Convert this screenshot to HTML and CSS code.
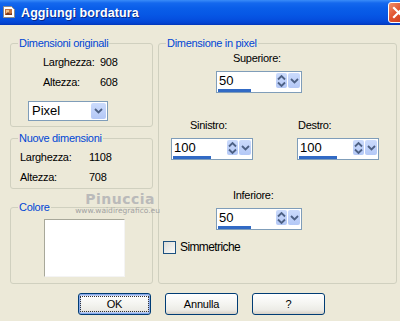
FILE: index.html
```html
<!DOCTYPE html>
<html lang="it">
<head>
  <meta charset="UTF-8" />
  <title>Aggiungi bordatura</title>
  <link rel="stylesheet" href="styles.css">
</head>
<body>

  <div class="dialog">
    <div class="titlebar">
      <svg class="app-icon" width="14" height="14" viewBox="0 0 14 14">
        <path d="M1.5 1.5h8l3 3v8h-11z" fill="#fff" stroke="#8a8a8a"/>
        <rect x="3" y="4" width="7" height="6" fill="#c8743c"/>
        <rect x="4" y="5" width="3" height="3" fill="#f2c48c"/>
        <path d="M3 10l3-3 2 2 2-1v2z" fill="#7d3a1c"/>
      </svg>
      <span class="title">Aggiungi bordatura</span>
      <div class="close">
        <svg width="21" height="21" viewBox="0 0 21 21">
          <path d="M6 6l9 9M15 6l-9 9" stroke="#fff" stroke-width="2.2" stroke-linecap="square"/>
        </svg>
      </div>
    </div>

    <div class="content">
      <div class="cols">
        <div class="left">
          <fieldset class="grp grp-orig">
            <legend>Dimensioni originali</legend>
            <div class="info info-orig">
              <span>Larghezza:</span><span>908</span>
              <span>Altezza:</span><span>608</span>
            </div>
            <div class="select">
              <span class="select-val">Pixel</span>
              <span class="btn-dd">
                <svg width="9" height="6" viewBox="0 0 9 6"><path d="M1 1l3.5 3.5L8 1" fill="none" stroke="#4d6185" stroke-width="1.8"/></svg>
              </span>
            </div>
          </fieldset>

          <fieldset class="grp grp-new">
            <legend>Nuove dimensioni</legend>
            <div class="info info-new">
              <span>Larghezza:</span><span>1108</span>
              <span>Altezza:</span><span>708</span>
            </div>
          </fieldset>

          <fieldset class="grp grp-color">
            <legend>Colore</legend>
            <div class="swatch"></div>
          </fieldset>

          <div class="watermark">
            <span class="wm-name">Pinuccia</span>
            <span class="wm-url">www.waidiregrafico.eu</span>
          </div>
        </div>

        <fieldset class="grp grp-pixel">
          <legend>Dimensione in pixel</legend>

          <div class="spin-group sg-top">
            <div class="spin-label">Superiore:</div>
            <div class="spin wide">
              <div class="spin-top">
                <span class="spin-val">50</span>
                <span class="btn-ud">
                  <svg width="9" height="14" viewBox="0 0 9 14"><path d="M1 5.5l3.5-3.5L8 5.5M1 8.5l3.5 3.5L8 8.5" fill="none" stroke="#4d6185" stroke-width="1.8"/></svg>
                </span>
                <span class="btn-dd">
                  <svg width="9" height="6" viewBox="0 0 9 6"><path d="M1 1l3.5 3.5L8 1" fill="none" stroke="#4d6185" stroke-width="1.8"/></svg>
                </span>
              </div>
              <div class="spin-bar" style="width: 33px"></div>
            </div>
          </div>

          <div class="spin-row">
            <div class="spin-group sg-left">
              <div class="spin-label">Sinistro:</div>
              <div class="spin">
                <div class="spin-top">
                  <span class="spin-val">100</span>
                  <span class="btn-ud">
                    <svg width="9" height="14" viewBox="0 0 9 14"><path d="M1 5.5l3.5-3.5L8 5.5M1 8.5l3.5 3.5L8 8.5" fill="none" stroke="#4d6185" stroke-width="1.8"/></svg>
                  </span>
                  <span class="btn-dd">
                    <svg width="9" height="6" viewBox="0 0 9 6"><path d="M1 1l3.5 3.5L8 1" fill="none" stroke="#4d6185" stroke-width="1.8"/></svg>
                  </span>
                </div>
                <div class="spin-bar" style="width: 38px"></div>
              </div>
            </div>

            <div class="spin-group sg-right">
              <div class="spin-label">Destro:</div>
              <div class="spin">
                <div class="spin-top">
                  <span class="spin-val">100</span>
                  <span class="btn-ud">
                    <svg width="9" height="14" viewBox="0 0 9 14"><path d="M1 5.5l3.5-3.5L8 5.5M1 8.5l3.5 3.5L8 8.5" fill="none" stroke="#4d6185" stroke-width="1.8"/></svg>
                  </span>
                  <span class="btn-dd">
                    <svg width="9" height="6" viewBox="0 0 9 6"><path d="M1 1l3.5 3.5L8 1" fill="none" stroke="#4d6185" stroke-width="1.8"/></svg>
                  </span>
                </div>
                <div class="spin-bar" style="width: 38px"></div>
              </div>
            </div>
          </div>

          <div class="spin-group sg-bottom">
            <div class="spin-label">Inferiore:</div>
            <div class="spin wide">
              <div class="spin-top">
                <span class="spin-val">50</span>
                <span class="btn-ud">
                  <svg width="9" height="14" viewBox="0 0 9 14"><path d="M1 5.5l3.5-3.5L8 5.5M1 8.5l3.5 3.5L8 8.5" fill="none" stroke="#4d6185" stroke-width="1.8"/></svg>
                </span>
                <span class="btn-dd">
                  <svg width="9" height="6" viewBox="0 0 9 6"><path d="M1 1l3.5 3.5L8 1" fill="none" stroke="#4d6185" stroke-width="1.8"/></svg>
                </span>
              </div>
              <div class="spin-bar" style="width: 33px"></div>
            </div>
          </div>

          <label class="check">
            <span class="check-box"></span>
            <span>Simmetriche</span>
          </label>
        </fieldset>
      </div>

      <div class="buttons">
        <button class="btn btn-default"><span>OK</span></button>
        <button class="btn"><span>Annulla</span></button>
        <button class="btn"><span>?</span></button>
      </div>
    </div>
  </div>

</body>
</html>
```

FILE: styles.css
```css
html, body {
  margin: 0;
  overflow: hidden;
  background: #ECE9D8;
}

.dialog {
  width: 412px;
  height: 321px;
  font-family: "Liberation Sans", Arial, sans-serif;
  font-size: 11px;
  letter-spacing: -0.3px;
  color: #000;
}

/* barra del titolo */
.titlebar {
  height: 25px;
  display: flex;
  align-items: center;
  box-sizing: border-box;
  padding-left: 2px;
  background: linear-gradient(#3a8cf8 0px, #1468ee 3px, #0a5ee9 8px, #0758e6 14px, #0550e0 19px, #0344d2 23px, #0236b8 25px);
}

.app-icon {
  flex: none;
  margin-top: -2px;
}

.title {
  margin-left: 5px;
  color: #fff;
  font-weight: bold;
  font-size: 12.5px;
  letter-spacing: 0.1px;
  text-shadow: 1px 1px 0 #0a2a8c;
}

.close {
  margin-left: auto;
  margin-right: 3px;
  width: 21px;
  height: 21px;
  box-sizing: border-box;
  border: 1px solid #fff;
  border-radius: 3px;
  background: linear-gradient(135deg, #f0906c, #e0532f 45%, #c8391a);
}

.close svg {
  display: block;
  margin: -1px;
}

/* contenuto */
.content {
  padding: 12px 0 0 10px;
}

.cols {
  display: flex;
  gap: 5px;
}

.left {
  position: relative;
  width: 143px;
  display: flex;
  flex-direction: column;
}

.grp {
  margin: 0;
  padding: 0;
  min-width: 0;
  box-sizing: border-box;
  border: 1px solid #D0D0BF;
  border-radius: 3px;
}

.grp legend {
  margin-left: 7px;
  padding: 0 1px;
  line-height: 13px;
  color: #0046D5;
}

.grp-orig {
  height: 90px;
}

.grp-new {
  height: 57px;
  margin-top: 5px;
}

.grp-color {
  height: 83px;
  margin-top: 12px;
}

.grp-pixel {
  width: 239px;
  height: 247px;
}

.info {
  display: grid;
  row-gap: 7px;
  line-height: 13px;
  margin-top: 6px;
}

.info-orig {
  grid-template-columns: 57px auto;
  margin-left: 32px;
}

.info-new {
  grid-template-columns: 69px auto;
  margin-left: 9px;
}

.select {
  display: flex;
  width: 80px;
  height: 20px;
  box-sizing: border-box;
  margin: 12px 0 0 17px;
  padding: 1px;
  border: 1px solid #7F9DB9;
  background: #fff;
}

.select-val {
  flex: 1;
  font-size: 13px;
  letter-spacing: 0;
  line-height: 16px;
  padding-left: 2px;
}

.btn-dd, .btn-ud {
  display: flex;
  align-items: center;
  justify-content: center;
  border-radius: 2px;
  background: linear-gradient(#cbdbfc, #b4c8f6);
}

.btn-dd {
  width: 15px;
}

.swatch {
  width: 81px;
  height: 58px;
  box-sizing: border-box;
  margin: 5px 0 0 33px;
  background: #fff;
  border: 1px solid;
  border-color: #a8a89a #f4f4f4 #f4f4f4 #a8a89a;
}

/* firma */
.watermark {
  position: absolute;
  left: 64px;
  top: 155px;
  width: 86px;
  display: flex;
  flex-direction: column;
  align-items: flex-end;
  font-family: "DejaVu Sans", sans-serif;
  letter-spacing: 0;
  pointer-events: none;
}

.wm-name {
  font-size: 14px;
  font-weight: bold;
  line-height: 14px;
  letter-spacing: 0.5px;
  margin-right: 5px;
  color: #bababa;
}

.wm-url {
  font-size: 7.5px;
  line-height: 9px;
  color: #a2a2a2;
}

/* controlli a rotella */
.spin-label {
  line-height: 13px;
}

.sg-top {
  margin: 2px 0 0 57px;
}

.sg-top .spin-label, .sg-bottom .spin-label {
  padding-left: 17px;
}

.spin-row {
  display: flex;
  gap: 44px;
  margin: 26px 0 0 12px;
}

.sg-left .spin-label {
  padding-left: 19px;
}

.sg-right .spin-label {
  padding-left: 1px;
}

.sg-bottom {
  margin: 29px 0 0 57px;
}

.sg-bottom .spin-label {
  margin-bottom: 2px;
}

.spin {
  width: 82px;
  height: 22px;
  box-sizing: border-box;
  margin-top: 6px;
  padding: 1px;
  border: 1px solid #7F9DB9;
  background: #fff;
}

.spin.wide {
  width: 86px;
}

.spin-top {
  display: flex;
  height: 15px;
  gap: 1px;
}

.spin-val {
  flex: 1;
  font-size: 13px;
  letter-spacing: 0;
  line-height: 15px;
  padding-left: 1px;
}

.spin-top .btn-ud {
  width: 11px;
}

.spin-top .btn-dd {
  width: 12px;
}

.spin-bar {
  height: 3px;
  margin-top: 1px;
  background: #316AC5;
}

.check {
  display: flex;
  align-items: center;
  gap: 4px;
  margin: 11px 0 0 4px;
  line-height: 13px;
  font-size: 12px;
  letter-spacing: -0.6px;
}

.check-box {
  width: 13px;
  height: 13px;
  box-sizing: border-box;
  border: 1px solid #1C5180;
  background: linear-gradient(135deg, #dcdcd7, #fbfbf9);
}

/* pulsanti */
.buttons {
  display: flex;
  gap: 14px;
  margin: 9px 0 0 68px;
}

.btn {
  width: 73px;
  height: 22px;
  padding: 0;
  box-sizing: border-box;
  border: 1px solid #003C74;
  border-radius: 3px;
  background: linear-gradient(#ffffff, #f4f4f0 50%, #ecebe6 80%, #d6d0c5);
  font-family: "Liberation Sans", Arial, sans-serif;
  font-size: 11px;
  letter-spacing: -0.2px;
  color: #000;
}

.btn-default {
  box-shadow: inset 0 0 0 1px #8aaae8, inset 0 0 0 2px #bccef4;
}

.btn-default span {
  display: block;
  margin: 2px;
  height: 14px;
  line-height: 14px;
  outline: 1px dotted #333;
}
```
